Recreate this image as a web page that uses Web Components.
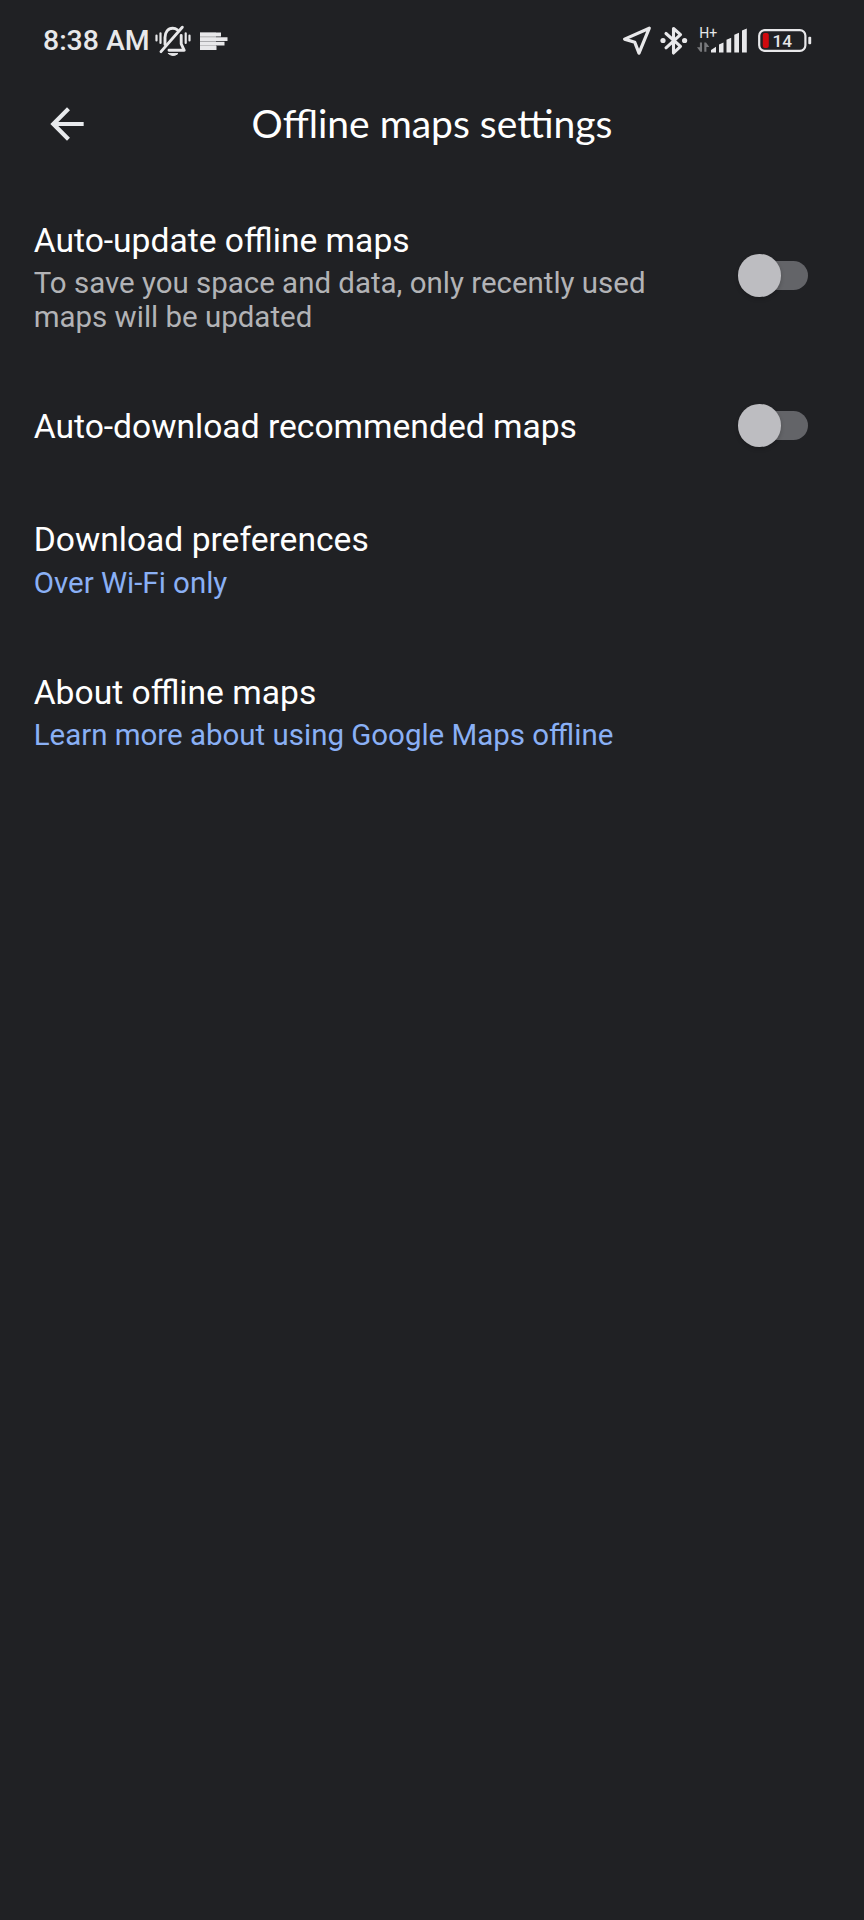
<!DOCTYPE html>
<html lang="en">
<head>
<meta charset="utf-8">
<title>Offline maps settings</title>
<style>
  html, body {
    margin: 0;
    min-height: 100%;
    background: #202124;
  }

  body {
    width: 864px;
    height: 1920px;
    overflow: hidden;
    font-family: Roboto, "Liberation Sans", sans-serif;
    color: #fff;
  }
</style>
</head>
<body>
<settings-page></settings-page>

<script>
class StatusBar extends HTMLElement {
  connectedCallback() {
    this.attachShadow({ mode: 'open' });
    this.shadowRoot.innerHTML = `
      <style>
        :host {
          display: flex;
          justify-content: space-between;
          height: 82px;
          padding: 0 52px 0 43px;
          box-sizing: border-box;
          color: #e8e8ea;
        }

        .side {
          display: flex;
          align-items: center;
          height: 82px;
        }

        .time {
          font-size: 28.4px;
          font-weight: 500;
          line-height: 34px;
          white-space: nowrap;
          width: 107px;
        }

        svg {
          display: block;
          flex: none;
        }

        .bell { margin-left: 4.5px; }
        .note { margin-left: 9.5px; }
        .bluetooth { margin-left: 8px; }
        .signal { margin-left: 9px; }
        .battery { margin-left: 9px; }
        svg text { font-family: Roboto, sans-serif; }
      </style>

      <div class="side">
        <span class="time"><slot></slot></span>
        <svg class="bell" width="36" height="32" viewBox="0.5 0 36 32" fill="none" stroke="currentColor" stroke-width="2.9" stroke-linecap="round" stroke-linejoin="round">
          <path d="M10.5 19.5V12.5C10.5 7 13.5 3.3 18.2 3.3c1.9 0 3.4.5 4.7 1.5M26.7 10.5v8.3l3 6.5H14.5"></path>
          <path d="M6.5 26.6L27.8 2.2"></path>
          <path d="M14 28.6h9.4q-4.7 4-9.4 0z" fill="currentColor" stroke-width="1"></path>
          <path d="M2 10.5v5M6 8.3v9.6M31.2 8.3v9.6M35 10.5v5" stroke-width="2.2"></path>
        </svg>
        <svg class="note" width="28" height="19" viewBox="0 0 28 19" fill="currentColor">
          <path d="M0 .5h21v4H0zM0 5.2h27.5v3.9H0zM0 9.7h24.5v3.8H0zM0 14.1h16.5v3.9H0z"></path>
          <path d="M0 .5h16v17.5H0z" opacity=".6"></path>
        </svg>
      </div>

      <div class="side">
        <svg width="30" height="30" viewBox="0 0 30 30" fill="none" stroke="currentColor" stroke-width="3.2" stroke-linejoin="round">
          <path d="M27.3 2.2L2.6 13.1l10.2 3.2 4.2 10.9z"></path>
        </svg>
        <svg class="bluetooth" width="28" height="32" viewBox="0 0 28 32" fill="none" stroke="currentColor" stroke-width="3.1" stroke-linejoin="round" stroke-linecap="round">
          <path d="M6 8.5l14.5 12.8-7 6.7V3.5l7 6.2L6 22.8"></path>
          <circle cx="3" cy="15.5" r="2.6" fill="currentColor" stroke="none"></circle>
          <circle cx="24.6" cy="15.5" r="2.6" fill="currentColor" stroke="none"></circle>
        </svg>
        <svg class="signal" width="52" height="32" viewBox="0 0 52 32" fill="currentColor">
          <text x="2.2" y="13" font-size="14">H+</text>
          <path d="M5 17.5v9.3H3.3L0 22.2h2.9v-4.7zM7.3 26.8v-9.3H9l3.3 4.6H9.4v4.7z" fill="#77787b"></path>
          <path d="M14 27.5v-2.5l5-3.2v5.7zM22 27.5v-8l4.5-2v10zM29.5 27.5V14.7l4.7-2v14.8zM37.3 27.5V9.7l4.7-2v19.8zM45 27.5V5.6l4.8-2v23.9z"></path>
        </svg>
        <svg class="battery" width="54" height="26" viewBox="0 0 54 26">
          <rect x="1.2" y="2.2" width="46.2" height="20.6" rx="5.5" fill="none" stroke="currentColor" stroke-width="2.2"></rect>
          <rect x="4.8" y="5" width="6" height="15" rx="2" fill="#d0090e"></rect>
          <rect x="50.3" y="8.8" width="2.9" height="7.4" rx="1" fill="currentColor"></rect>
          <text x="14.4" y="18.7" font-size="17.2" font-weight="500" fill="currentColor">14</text>
        </svg>
      </div>
    `;
  }
}

class AppBar extends HTMLElement {
  connectedCallback() {
    this.attachShadow({ mode: 'open' });
    this.shadowRoot.innerHTML = `
      <style>
        :host {
          display: grid;
          grid-template-columns: 50px 1fr 50px;
          align-items: center;
          height: 103px;
          padding: 16px 41.5px 36px 41.5px;
          box-sizing: border-box;
        }

        button {
          display: block;
          padding: 0;
          border: 0;
          background: none;
          color: #e8eaed;
        }

        svg {
          display: block;
          width: 50px;
          height: 50px;
        }

        h1 {
          margin: 0 0 1px;
          font: 400 39px/48px Lato, "Open Sans", sans-serif;
          text-align: center;
          white-space: nowrap;
        }
      </style>

      <button aria-label="Back">
        <svg viewBox="0 0 24 24" fill="currentColor">
          <path d="M20 11H7.83l5.59-5.59L12 4l-8 8 8 8 1.41-1.41L7.83 13H20v-2z"></path>
        </svg>
      </button>
      <h1><slot></slot></h1>
    `;
  }
}

class ToggleSwitch extends HTMLElement {
  connectedCallback() {
    this.attachShadow({ mode: 'open' });
    this.shadowRoot.innerHTML = `
      <style>
        :host {
          display: flex;
          flex: none;
          align-items: center;
          width: 70px;
          height: 43px;
        }

        .knob {
          width: 42.5px;
          height: 42.5px;
          border-radius: 50%;
          background: #bdbdc1;
          box-shadow: 0 2px 4px rgba(0, 0, 0, 0.2);
          z-index: 1;
        }

        .track {
          width: 60px;
          height: 29.5px;
          margin-left: -33px;
          border-radius: 15px;
          background: #636468;
        }
      </style>
      <div class="knob"></div>
      <div class="track"></div>
    `;
  }
}

class SettingRow extends HTMLElement {
  connectedCallback() {
    this.attachShadow({ mode: 'open' });
    this.shadowRoot.innerHTML = `
      <style>
        :host {
          display: flex;
          align-items: center;
          justify-content: space-between;
          padding: 36px 56px 37px 33.7px;
        }

        .title {
          font-size: 33.62px;
          line-height: 40px;
        }

        .summary {
          max-width: 640px;
          font-size: 29.46px;
          line-height: 34px;
          color: #b2b3b6;
        }

        ::slotted([slot="summary"]) {
          display: block;
          padding-top: 5.4px;
        }

        :host([link]) .summary {
          color: #8ab0f5;
        }

        /* keeps the switch from stretching single-line rows */
        ::slotted(toggle-switch) {
          margin-top: -4px;
        }
      </style>

      <div>
        <div class="title"><slot></slot></div>
        <div class="summary"><slot name="summary"></slot></div>
      </div>
      <slot name="control"></slot>
    `;
  }
}

class SettingsPage extends HTMLElement {
  connectedCallback() {
    this.attachShadow({ mode: 'open' });
    this.shadowRoot.innerHTML = `
      <style>
        :host {
          display: block;
        }
      </style>

      <status-bar>8:38 AM</status-bar>
      <app-bar>Offline maps settings</app-bar>
      <main>
        <setting-row>
          Auto-update offline maps
          <span slot="summary">To save you space and data, only recently used<br>maps will be updated</span>
          <toggle-switch slot="control"></toggle-switch>
        </setting-row>
        <setting-row>
          Auto-download recommended maps
          <toggle-switch slot="control"></toggle-switch>
        </setting-row>
        <setting-row link>
          Download preferences
          <span slot="summary">Over Wi-Fi only</span>
        </setting-row>
        <setting-row link>
          About offline maps
          <span slot="summary">Learn more about using Google Maps offline</span>
        </setting-row>
      </main>
    `;
  }
}

customElements.define('status-bar', StatusBar);
customElements.define('app-bar', AppBar);
customElements.define('toggle-switch', ToggleSwitch);
customElements.define('setting-row', SettingRow);
customElements.define('settings-page', SettingsPage);
</script>
</body>
</html>
